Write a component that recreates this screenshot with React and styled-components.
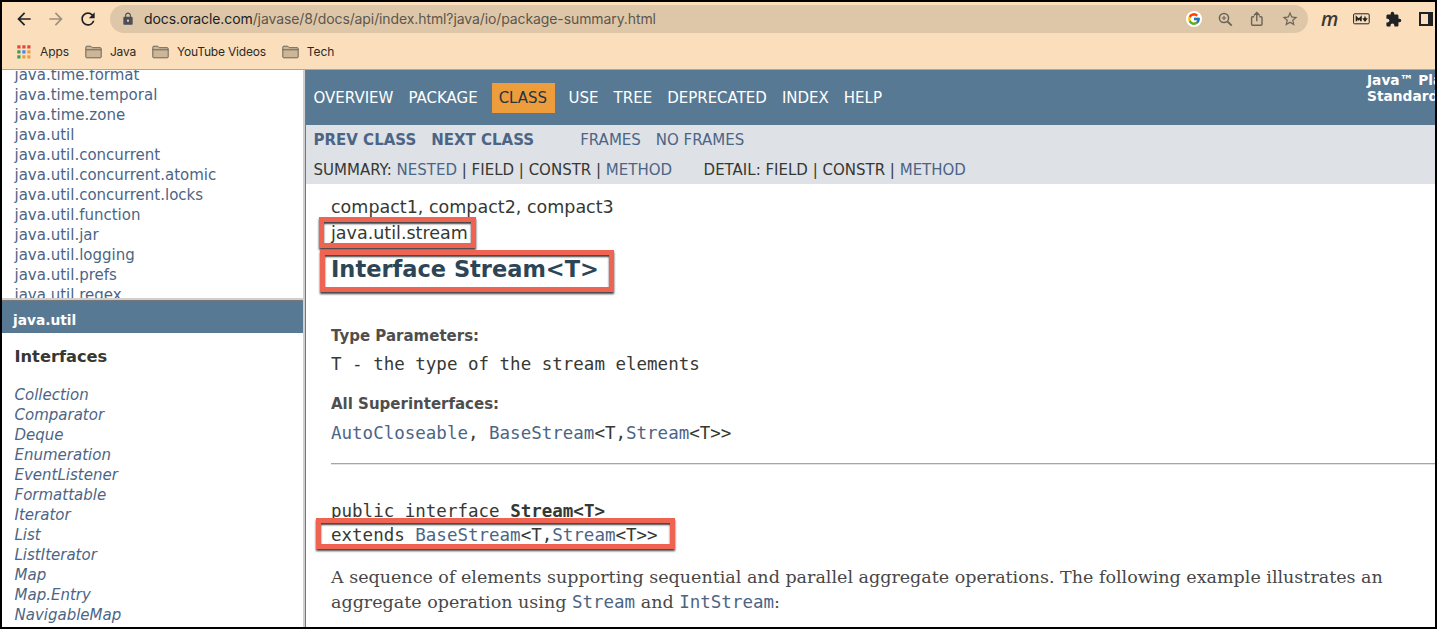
import React from "react";
import styled, { createGlobalStyle, css } from "styled-components";
import {
  MdArrowBack,
  MdArrowForward,
  MdRefresh,
  MdLock,
  MdStarOutline,
  MdExtension,
} from "react-icons/md";
import { FcGoogle } from "react-icons/fc";

const sans = `"DejaVu Sans", sans-serif`;
const mono = `"DejaVu Sans Mono", monospace`;
const serif = `"DejaVu Serif", serif`;
const ui = `Inter, "Liberation Sans", sans-serif`;
const linkColor = "#4c6585";
const ink = "#353833";

const Global = createGlobalStyle`
  * { box-sizing: border-box; }
  body { margin: 0; background: #000; overflow: hidden; }
`;

const Window = styled.div`
  position: relative;
  width: 1437px;
  height: 629px;
  border: 2px solid #000;
  background: #fff;
  display: flex;
  flex-direction: column;
  overflow: hidden;
`;

const Chrome = styled.header`
  flex: none;
  height: 68px;
  background: #fbdfbc;
  border-bottom: 1px solid #b3a697;
  font-family: ${ui};
`;

const Toolbar = styled.div`
  display: flex;
  align-items: center;
  height: 34px;
  padding: 0 0 0 12px;
`;

const ToolIcon = styled.span`
  display: flex;
  flex: none;
  width: ${(p) => p.$w || 20}px;
  margin-right: ${(p) => p.$gap || 0}px;
  color: ${(p) => p.$color || "#202124"};
  font-size: ${(p) => p.$size || 20}px;
`;

const AddressBar = styled.div`
  flex: none;
  display: flex;
  align-items: center;
  width: 1198px;
  height: 28px;
  padding: 0 9px 0 11px;
  border-radius: 14px;
  background: #dec7a8;
`;

const Url = styled.div`
  flex: 1;
  margin-left: 7px;
  color: #5d564d;
  font-size: 14px;
  line-height: 20px;
  letter-spacing: -0.1px;
  white-space: nowrap;
  b { font-weight: 400; color: #202124; }
`;

const GoogleBadge = styled.span`
  display: flex;
  align-items: center;
  justify-content: center;
  width: 16px;
  height: 16px;
  margin-right: 16px;
  border-radius: 50%;
  background: #fff;
  font-size: 14px;
`;

const Bookmarks = styled.nav`
  display: flex;
  align-items: center;
  height: 31px;
  padding-left: 15px;
`;

const Bookmark = styled.span`
  display: flex;
  align-items: center;
  gap: ${(p) => p.$gap || 8}px;
  margin-right: 16px;
  color: #2b2a28;
  font-size: 12px;
  line-height: 16px;
  letter-spacing: ${(p) => p.$track || -0.1}px;
  white-space: nowrap;
`;

const Frames = styled.div`
  flex: 1;
  min-height: 0;
  display: flex;
`;

const Sidebar = styled.aside`
  flex: none;
  width: 301px;
  display: flex;
  flex-direction: column;
`;

const Divider = styled.div`
  flex: none;
  ${(p) =>
    p.$vertical
      ? css`width: 3px; border-left: 2px solid #cfcfcf; border-right: 1px solid #777;`
      : css`height: 3px; border-top: 2px solid #cfcfcf; border-bottom: 1px solid #777;`}
`;

const PackageFrame = styled.div`
  flex: none;
  height: 228px;
  overflow: hidden;
  padding-left: 12.5px;
`;

const LinkList = styled.ul`
  list-style: none;
  margin: ${(p) => p.$top}px 0 0;
  padding: 0;
  font: ${(p) => (p.$italic ? "italic" : "normal")} 15px/20px ${sans};
  color: ${linkColor};
`;

const FrameTitle = styled.div`
  flex: none;
  height: 32px;
  padding-left: 11px;
  background: #587993;
  color: #fff;
  font: bold 13.75px/38px ${sans};
`;

const ClassFrame = styled.div`
  flex: 1;
  min-height: 0;
  overflow: hidden;
  padding-left: 12.5px;
`;

const ListHeading = styled.h3`
  margin: 14px 0 0;
  color: ${ink};
  font: bold 16.25px/20px ${sans};
`;

const Main = styled.main`
  flex: 1;
  min-width: 0;
  overflow: hidden;
  color: ${ink};
`;

const TopNav = styled.div`
  display: flex;
  height: 55px;
  padding-top: 13px;
  padding-left: 7.5px;
  background: #587993;
  color: #fff;
  font: 15px/31px ${sans};
  white-space: nowrap;
`;

const NavItem = styled.span`
  height: 30px;
  margin-right: ${(p) => (p.$active ? 14 : 15)}px;
  ${(p) =>
    p.$active &&
    css`
      margin-left: -1px;
      padding: 0 7.5px 0 7px;
      background: #ee9d3d;
      color: #253441;
    `}
`;

const About = styled.div`
  flex: none;
  margin: -11px 0 0 470px;
  font: bold 13.75px/16px ${sans};
`;

const SubNav = styled.div`
  height: 59px;
  padding-left: 7.5px;
  background: #dee1e6;
  font: 15px/31px ${sans};
`;

const SubRow = styled.div`
  display: flex;
  height: 30px;
  white-space: pre;
`;

const SubItem = styled.span`
  margin-right: ${(p) => p.$gap || 0}px;
  color: ${(p) => (p.$plain ? ink : linkColor)};
  font-weight: ${(p) => (p.$bold ? 700 : 400)};
`;

const Article = styled.article`
  padding: 10px 0 0 25px;
`;

const SubTitle = styled.div`
  font: 17.5px/26px ${sans};
`;

const Title = styled.h2`
  margin: 7px 0 0;
  color: #2c4557;
  font: bold 22.5px/32px ${sans};
`;

const Label = styled.div`
  margin-top: ${(p) => p.$top}px;
  color: #4e4e4e;
  font: bold 15px/20px ${sans};
`;

const Code = styled.div`
  margin-top: ${(p) => p.$top || 0}px;
  font: 17.5px/24px ${mono};
  white-space: pre;
`;

const Ref = styled.a`
  color: ${linkColor};
  font-family: ${mono};
`;

const Rule = styled.hr`
  height: 2px;
  margin: 18px 0 0;
  border: 0;
  border-top: 1px solid #a5a5a5;
  border-bottom: 1px solid #e4e4e4;
`;

const Prose = styled.p`
  margin: 18px 0 0;
  color: #474747;
  font: 17.5px/24.5px ${serif};
  white-space: nowrap;
`;

const Highlight = styled.div`
  position: absolute;
  left: ${(p) => p.$x}px;
  top: ${(p) => p.$y}px;
  width: ${(p) => p.$w}px;
  height: ${(p) => p.$h}px;
  border: 5px solid #ee6352;
  box-shadow: 0 2px 2px rgba(0, 0, 0, 0.75), inset 0 2px 2px rgba(0, 0, 0, 0.75);
`;

const AppsIcon = () => {
  const colors = ["#e0483e", "#e0483e", "#e0483e", "#3f9a57", "#4285f4", "#e9a23b", "#3f9a57", "#e9a23b", "#e9a23b"];
  return (
    <svg width="14" height="14" viewBox="0 0 14 14">
      {colors.map((c, i) => (
        <rect key={i} x={(i % 3) * 5 + 0.3} y={Math.floor(i / 3) * 5 + 0.3} width="3.2" height="3.2" fill={c} />
      ))}
    </svg>
  );
};

const FolderIcon = () => (
  <svg width="17" height="14" viewBox="0 0 17 14" fill="#cdb698" stroke="#6b6459" strokeWidth="1">
    <path d="M.8 12V2.2q0-1 1-1h4l1.4 1.5h8q1 0 1 1V12q0 .8-1 .8H1.8q-1 0-1-.8z" />
    <path d="M.8 4.8h15.4" />
  </svg>
);

const ZoomIcon = () => (
  <svg width="15" height="15" viewBox="0 0 15 15" fill="none" stroke="currentColor">
    <circle cx="6" cy="6" r="4.6" strokeWidth="1.5" />
    <path d="M9.500 9.500l4.200 4.200" strokeWidth="1.8" />
    <path d="M6 3.900v4.200M3.900 6h4.200" strokeWidth="1.1" />
  </svg>
);

const ShareIcon = () => (
  <svg width="14" height="16" viewBox="0 0 14 16" fill="none" stroke="currentColor" strokeWidth="1.4">
    <path d="M4.2 5.7H2.6q-1 0-1 1v6.6q0 1 1 1h8.4q1 0 1-1V6.700q0-1-1-1H9.400M6.800 10.300V1.900M3.900 4.500l2.900-2.900 2.900 2.900" />
  </svg>
);

const MarkdownIcon = () => (
  <svg width="17" height="12" viewBox="0 0 17 12" fill="none" stroke="#202124">
    <rect x=".6" y=".8" width="15.6" height="10" rx="1" />
    <path d="M3.5 8.300v-4l2.200 2.200 2.200-2.200v4" strokeWidth="1.7" />
    <path d="M12 3.500v3M10.600 6h2.800l-1.400 1.800z" strokeWidth="1.4" fill="#202124" />
  </svg>
);

const PanelIcon = () => (
  <svg width="14" height="14" viewBox="0 0 14 14">
    <rect x="1" y="1" width="12" height="12" fill="none" stroke="#202124" strokeWidth="2" />
    <rect x="9" y="1" width="4" height="12" fill="#202124" />
  </svg>
);

const Letter = styled.span`
  flex: none;
  width: 32px;
  color: #3b3a35;
  font: italic 600 19.5px/20px "Open Sans", sans-serif;
`;

const packages = [
  "java.time.format", "java.time.temporal", "java.time.zone", "java.util", "java.util.concurrent",
  "java.util.concurrent.atomic", "java.util.concurrent.locks", "java.util.function", "java.util.jar",
  "java.util.logging", "java.util.prefs", "java.util.regex",
];
const interfaces = [
  "Collection", "Comparator", "Deque", "Enumeration", "EventListener", "Formattable", "Iterator",
  "List", "ListIterator", "Map", "Map.Entry", "NavigableMap",
];
const nav = ["OVERVIEW", "PACKAGE", "CLASS", "USE", "TREE", "DEPRECATED", "INDEX", "HELP"];

export default function App() {
  return (
    <>
      <Global />
      <Window>
        <Chrome>
          <Toolbar>
            <ToolIcon $gap={12}><MdArrowBack /></ToolIcon>
            <ToolIcon $gap={12} $color="#9f907e"><MdArrowForward /></ToolIcon>
            <ToolIcon $w={32}><MdRefresh /></ToolIcon>
            <AddressBar>
              <ToolIcon $w={16} $size={14} $color="#4c4d55"><MdLock /></ToolIcon>
              <Url><b>docs.oracle.com</b>/javase/8/docs/api/index.html?java/io/package-summary.html</Url>
              <GoogleBadge><FcGoogle /></GoogleBadge>
              <ToolIcon $w={17} $gap={15} $color="#6a6359"><ZoomIcon /></ToolIcon>
              <ToolIcon $w={16} $gap={15} $color="#6a6359"><ShareIcon /></ToolIcon>
              <ToolIcon $w={18} $size={18} $color="#6a6359"><MdStarOutline /></ToolIcon>
            </AddressBar>
            <ToolIcon $w={13} />
            <Letter>m</Letter>
            <ToolIcon $w={32}><MarkdownIcon /></ToolIcon>
            <ToolIcon $w={34} $size={17}><MdExtension /></ToolIcon>
            <PanelIcon />
          </Toolbar>
          <Bookmarks>
            <Bookmark $gap={9}><AppsIcon />Apps</Bookmark>
            <Bookmark $track={-0.2}><FolderIcon />Java</Bookmark>
            <Bookmark $track={-0.2}><FolderIcon />YouTube Videos</Bookmark>
            <Bookmark><FolderIcon />Tech</Bookmark>
          </Bookmarks>
        </Chrome>
        <Frames>
          <Sidebar>
            <PackageFrame>
              <LinkList $top={-5}>{packages.map((p) => <li key={p}>{p}</li>)}</LinkList>
            </PackageFrame>
            <Divider />
            <FrameTitle>java.util</FrameTitle>
            <ClassFrame>
              <ListHeading>Interfaces</ListHeading>
              <LinkList $italic $top={18}>{interfaces.map((p) => <li key={p}>{p}</li>)}</LinkList>
            </ClassFrame>
          </Sidebar>
          <Divider $vertical />
          <Main>
            <TopNav>
              {nav.map((n) => <NavItem key={n} $active={n === "CLASS"}>{n}</NavItem>)}
              <About>Java™ Platform<br />Standard Ed. 8</About>
            </TopNav>
            <SubNav>
              <SubRow>
                <SubItem $bold $gap={15}>PREV CLASS</SubItem>
                <SubItem $bold $gap={46}>NEXT CLASS</SubItem>
                <SubItem $gap={15}>FRAMES</SubItem>
                <SubItem>NO FRAMES</SubItem>
              </SubRow>
              <SubRow>
                <SubItem $plain>SUMMARY: </SubItem>
                <SubItem>NESTED</SubItem>
                <SubItem $plain> | FIELD | CONSTR | </SubItem>
                <SubItem $gap={31.5}>METHOD</SubItem>
                <SubItem $plain>DETAIL: FIELD | CONSTR | </SubItem>
                <SubItem>METHOD</SubItem>
              </SubRow>
            </SubNav>
            <Article>
              <SubTitle>compact1, compact2, compact3</SubTitle>
              <SubTitle>java.util.stream</SubTitle>
              <Title>Interface Stream&lt;T&gt;</Title>
              <Label $top={41}>Type Parameters:</Label>
              <Code $top={6}>T - the type of the stream elements</Code>
              <Label $top={18}>All Superinterfaces:</Label>
              <Code $top={7}><Ref>AutoCloseable</Ref>, <Ref>BaseStream</Ref>&lt;T,<Ref>Stream</Ref>&lt;T&gt;&gt;</Code>
              <Rule />
              <Code $top={34}>public interface <b>Stream&lt;T&gt;</b></Code>
              <Code>extends <Ref>BaseStream</Ref>&lt;T,<Ref>Stream</Ref>&lt;T&gt;&gt;</Code>
              <Prose>
                A sequence of elements supporting sequential and parallel aggregate operations. The following example illustrates an<br />
                aggregate operation using <Ref>Stream</Ref> and <Ref>IntStream</Ref>:
              </Prose>
            </Article>
          </Main>
        </Frames>
        <Highlight $x={317} $y={215} $w={157} $h={31} />
        <Highlight $x={318} $y={248} $w={294} $h={42} />
        <Highlight $x={314} $y={516} $w={359} $h={31} />
      </Window>
    </>
  );
}
